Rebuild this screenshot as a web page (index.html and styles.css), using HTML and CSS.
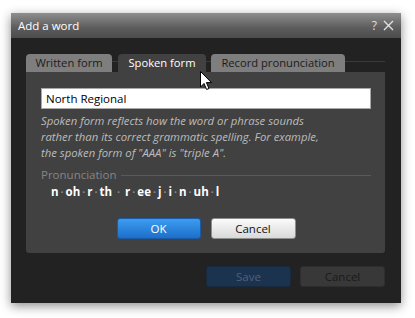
FILE: index.html
```html
<!DOCTYPE html>
<html>
<head>
<meta charset="utf-8">
<link rel="stylesheet" href="styles.css">
</head>
<body>
<div class="window">
  <div class="titlebar">
    <span class="title">Add a word</span>
    <span class="controls"><span class="help">?</span><svg class="close" width="11" height="11" viewBox="0 0 11 11"><path d="M1 1 L10 10 M10 1 L1 10" stroke="#e0e0e0" stroke-width="1.4"/></svg></span>
  </div>
  <div class="body">
    <div class="tabs">
      <div class="tab tab-written">Written form</div>
      <div class="tab tab-spoken active">Spoken form</div>
      <div class="tab tab-record">Record pronunciation</div>
    </div>
    <div class="panel">
      <div class="input">North Regional</div>
      <p class="desc">Spoken form reflects how the word or phrase sounds<br>rather than its correct grammatic spelling. For example,<br>the spoken form of "AAA" is "triple A".</p>
      <div class="pron-label"><span>Pronunciation</span><span class="rule"></span></div>
      <div class="phonemes">
        <b>n</b><i>•</i><b>oh</b><i>•</i><b>r</b><i>•</i><b>th</b><i class="wide">•</i><b>r</b><i>•</i><b>ee</b><i>•</i><b>j</b><i>•</i><b>i</b><i>•</i><b>n</b><i>•</i><b>uh</b><i>•</i><b>l</b>
      </div>
      <div class="panel-buttons">
        <div class="btn btn-ok">OK</div>
        <div class="btn btn-cancel">Cancel</div>
      </div>
    </div>
    <div class="footer">
      <div class="btn btn-save">Save</div>
      <div class="btn btn-dcancel">Cancel</div>
    </div>
  </div>
</div>
<svg class="cursor" width="13" height="20" viewBox="0 0 13 20"><path d="M0.5 0.5 L0.5 16 L4 12.5 L6.6 18.5 L9 17.5 L6.4 11.6 L11.5 11.6 Z" fill="#fff" stroke="#000" stroke-width="1"/></svg>
</body>
</html>
```
FILE: styles.css
```css
html, body {
  margin: 0;
  padding: 0;
  background: #ffffff;
}
body {
  width: 415px;
  height: 318px;
  overflow: hidden;
  position: relative;
  font-family: "Open Sans", "Noto Sans", sans-serif;
}
.window {
  margin: 13px 0 0 11px;
  width: 390px;
  height: 290px;
  background: #222222;
  box-shadow: 0 3px 10px rgba(0,0,0,0.45);
  display: flex;
  flex-direction: column;
}
.titlebar {
  height: 25px;
  background: linear-gradient(#8e8e8e, #5c5c5c 60%, #4c4c4c);
  display: flex;
  align-items: center;
  justify-content: space-between;
  padding: 0 7px 0 7px;
  color: #ffffff;
}
.title {
  font-size: 11.5px;
}
.controls {
  display: flex;
  align-items: center;
  gap: 6px;
  color: #e0e0e0;
  font-size: 12px;
}
.body {
  flex: 1;
  padding: 16px 16px 0 15px;
  display: flex;
  flex-direction: column;
}
.tabs {
  display: flex;
  height: 18px;
  background: linear-gradient(transparent 7px, #3a3a3a 7px, #3a3a3a 8px, transparent 8px);
}
.tab {
  height: 18px;
  box-sizing: border-box;
  background: #7e7e7e;
  color: #1c1c1c;
  font-size: 11.2px;
  line-height: 18px;
  text-align: center;
  border-radius: 4px 4px 0 0;
}
.tab-written { width: 86px; margin-right: 6px; }
.tab-spoken { width: 88px; margin-right: 5px; }
.tab-record { width: 134px; }
.tab.active {
  background: #414141;
  color: #ffffff;
}
.panel {
  background: #414141;
  height: 181px;
  border-radius: 0 0 3px 3px;
  padding: 16px 14px 0 15px;
  box-sizing: border-box;
}
.input {
  height: 21px;
  box-sizing: border-box;
  background: #ffffff;
  border: 1px solid #a8a8a8;
  color: #000;
  font-size: 11.5px;
  line-height: 19px;
  padding-left: 4px;
}
.desc {
  margin: 4px 0 0 0;
  font-style: italic;
  color: #bcbcbc;
  font-size: 11.3px;
  line-height: 16px;
}
.pron-label {
  margin-top: 6px;
  display: flex;
  align-items: center;
  color: #858585;
  font-size: 11.5px;
  line-height: 16px;
}
.rule {
  flex: 1;
  height: 1px;
  background: #5a5a5a;
  margin-left: 5px;
}
.phonemes {
  margin-top: 1px;
  padding-left: 10px;
  font-size: 11.5px;
  line-height: 16px;
  color: #fff;
  display: flex;
  align-items: center;
}
.phonemes b { font-weight: 700; }
.phonemes i {
  font-style: normal;
  color: #8a8a8a;
  font-size: 8px;
  margin: 0 2px;
}
.phonemes i.wide { margin: 0 5px; }
.panel-buttons {
  margin-top: 18px;
  display: flex;
  justify-content: center;
  gap: 10px;
}
.btn {
  height: 21px;
  box-sizing: border-box;
  border-radius: 3px;
  font-size: 11.5px;
  line-height: 19px;
  text-align: center;
}
.btn-ok {
  width: 84px;
  background: linear-gradient(#3c9cf0, #1d6fc9);
  border: 1px solid #1a5ba8;
  color: #fff;
}
.btn-cancel {
  width: 85px;
  background: linear-gradient(#fbfbfb, #d9d9d9);
  border: 1px solid #8e8e8e;
  color: #111;
}
.footer {
  margin-top: 13px;
  display: flex;
  justify-content: flex-end;
  gap: 9px;
}
.btn-save {
  width: 85px;
  background: #1c3350;
  border: 1px solid #18293e;
  color: #4f6276;
}
.btn-dcancel {
  width: 85px;
  background: #383838;
  border: 1px solid #2e2e2e;
  color: #1a1a1a;
}
.cursor {
  position: absolute;
  left: 200px;
  top: 71px;
}
```
